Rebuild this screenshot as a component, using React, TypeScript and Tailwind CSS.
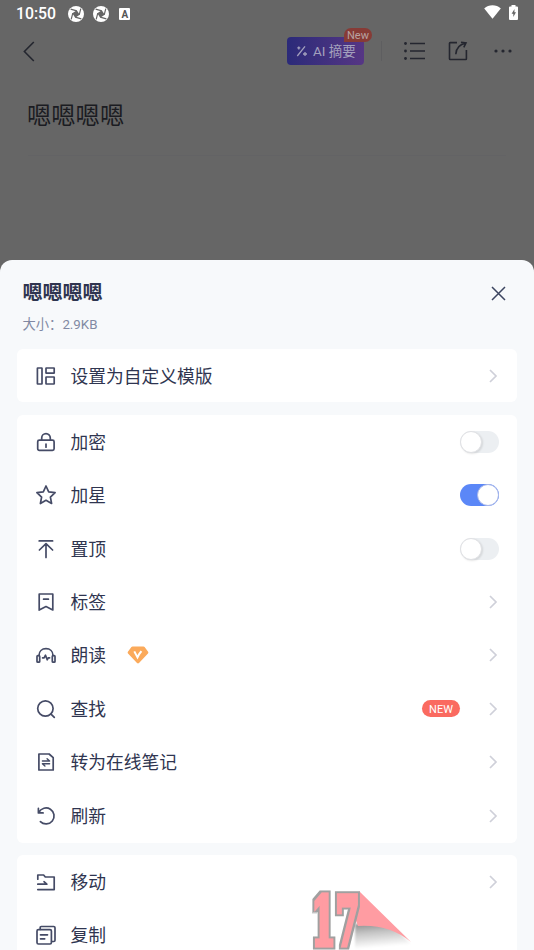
import type { ReactNode } from 'react';
import clsx from 'clsx';

interface MenuRow {
  label: string;
  icon: ReactNode;
  control?: 'toggle' | 'link';
  on?: boolean;
  vip?: boolean;
  isNew?: boolean;
}

function Icon({ children }: { children: ReactNode }) {
  return (
    <svg
      width="22"
      height="22"
      viewBox="0 0 22 22"
      fill="none"
      stroke="#454b66"
      strokeWidth="1.7"
      strokeLinejoin="round"
      strokeLinecap="round"
      className="shrink-0"
    >
      {children}
    </svg>
  );
}

const templateRows: MenuRow[] = [
  {
    label: '设置为自定义模版',
    control: 'link',
    icon: (
      <Icon>
        <rect x="2.4" y="3" width="4.6" height="16" rx="0.3" />
        <rect x="11" y="3" width="8.2" height="5.2" rx="0.3" />
        <rect x="11" y="12" width="8.2" height="7" rx="0.3" />
      </Icon>
    ),
  },
];

const settingRows: MenuRow[] = [
  {
    label: '加密',
    control: 'toggle',
    icon: (
      <Icon>
        <rect x="2.7" y="9.2" width="16.4" height="10.2" rx="1.6" />
        <path d="M6.7 9V7a4.3 4.3 0 0 1 8.6 0v2M11 13v3.2" />
      </Icon>
    ),
  },
  {
    label: '加星',
    control: 'toggle',
    on: true,
    icon: (
      <Icon>
        <path d="M11 2l2.7 5.9 6.4.8-4.7 4.4 1.2 6.4L11 16.3l-5.6 3.2 1.2-6.4-4.7-4.4 6.4-.8z" />
      </Icon>
    ),
  },
  {
    label: '置顶',
    control: 'toggle',
    icon: (
      <Icon>
        <path d="M4.2 2.9h13.4M11 6.200v13.300M4.400 12L11 5.700l6.600 6.300" />
      </Icon>
    ),
  },
  {
    label: '标签',
    control: 'link',
    icon: (
      <Icon>
        <path d="M4.2 3h13.6v16L11 15.6 4.2 19zM8.6 8.2h4.8" />
      </Icon>
    ),
  },
  {
    label: '朗读',
    control: 'link',
    vip: true,
    icon: (
      <Icon>
        <path d="M4 11.5C4 7.4 7 4.700 11 4.700s7 2.700 7 6.800" />
        <rect x="2" y="11.6" width="2.7" height="6.6" rx="0.8" />
        <rect x="17.3" y="11.6" width="2.7" height="6.6" rx="0.8" />
        <path d="M7.6 13.8h1.500l1.400-2.600 1.700 4.600 1-2h1.400" />
      </Icon>
    ),
  },
  {
    label: '查找',
    control: 'link',
    isNew: true,
    icon: (
      <Icon>
        <circle cx="10.4" cy="10.5" r="7.7" />
        <path d="M16 16.1l3.3 3.3" />
      </Icon>
    ),
  },
  {
    label: '转为在线笔记',
    control: 'link',
    icon: (
      <Icon>
        <path d="M3.9 3h10.2l4.1 3.7V19H3.9z" />
        <path d="M7.4 10h7.2l-2.5-2.200M14.6 12.8H7.4l2.5 2.200" strokeWidth="1.4" />
      </Icon>
    ),
  },
  {
    label: '刷新',
    control: 'link',
    icon: (
      <Icon>
        <path d="M3.4 3.4v4.5h4.7M3.9 7.4A8 8 0 1 1 5.4 16.6" />
      </Icon>
    ),
  },
];

const fileRows: MenuRow[] = [
  {
    label: '移动',
    control: 'link',
    icon: (
      <Icon>
        <path d="M2.8 8.2V4h5.8l1.7 2h8.9v12.6H2.8M2.8 13.2h9L9 10.7" />
      </Icon>
    ),
  },
  {
    label: '复制',
    icon: (
      <Icon>
        <rect x="2" y="5.6" width="14.4" height="14.4" rx="1.4" />
        <path d="M5.2 5.3V3.6c0-.7.4-1.1 1.1-1.1h12.4c.8 0 1.3.5 1.3 1.3v12.4c0 .8-.4 1.3-1.2 1.3h-2.1M5.5 10.8h7M5.5 14.8h4.2" />
      </Icon>
    ),
  },
];

function Chevron() {
  return (
    <svg width="9" height="14" viewBox="0 0 9 14" fill="none" stroke="#cfd0d9" strokeWidth="1.7" className="mr-px">
      <path d="M1 1l6 6-6 6" />
    </svg>
  );
}

function Toggle({ on }: { on?: boolean }) {
  return (
    <div className={clsx('flex h-[22px] w-[39px] rounded-full', on ? 'justify-end bg-[#5b87f7]' : 'bg-[#eceff2]')}>
      <div
        className={clsx(
          'size-[22px] rounded-full border bg-white',
          on ? 'border-[#a9b7e8]' : 'border-[#e0e1e4] shadow-[1px_1px_2px_rgba(0,0,0,0.1)]'
        )}
      />
    </div>
  );
}

function VipBadge() {
  return (
    <svg width="22" height="18" viewBox="0 0 22 18" className="ml-[21px]">
      <path
        d="M5.6.5h10.8c.5 0 .9.2 1.2.6l3.5 4.6c.4.6.4 1.2-.1 1.7l-9 9.6c-.6.6-1.4.6-2 0L1 7.4c-.5-.5-.5-1.1-.1-1.7l3.5-4.6c.3-.4.7-.6 1.2-.6z"
        fill="#fbaa5b"
      />
      <path d="M7.3 5.4l3.2 6 1.700-3.400M12.200 8.200l2.200-3" stroke="#fff" strokeWidth="2" fill="none" />
    </svg>
  );
}

function Row({ row }: { row: MenuRow }) {
  return (
    <div className="flex h-[53.45px] items-center px-[18px]">
      {row.icon}
      <span className="ml-[13.5px] pt-[2px] text-[17.75px] leading-6 text-[#2f3550]">{row.label}</span>
      {row.vip && <VipBadge />}
      <div className="ml-auto flex items-center">
        {row.isNew && (
          <span className="mr-[29px] flex h-[17px] w-[38px] items-center justify-center rounded-full bg-[#fa6a60] pt-[2px] text-[11px] leading-none text-white">
            NEW
          </span>
        )}
        {row.control === 'toggle' && <Toggle on={row.on} />}
        {row.control === 'link' && <Chevron />}
      </div>
    </div>
  );
}

function Card({ rows }: { rows: MenuRow[] }) {
  return (
    <div className="mx-[17px] rounded-md bg-white">
      {rows.map((row) => (
        <Row key={row.label} row={row} />
      ))}
    </div>
  );
}

// Aperture-like notification glyph
function Swirl() {
  return (
    <svg width="16" height="16" viewBox="0 0 16 16">
      <circle cx="8" cy="8" r="8" fill="#fff" />
      <path d="M8.800 4.300L11.700 8.800 7.200 11.700 4.300 7.200z" fill="#666" />
      <path d="M8.800 4.800L2.600 3.200M11.200 8.800L12.800 2.600M7.200 11.200L13.400 12.800M4.800 7.200L3.200 13.400" stroke="#666" strokeWidth="1.200" />
    </svg>
  );
}

function StatusBar() {
  return (
    <div className="flex h-7 items-center pr-4 pl-4 text-white">
      <span className="w-[52px] text-[15.8px] font-medium">10:50</span>
      <Swirl />
      <span className="w-[8.6px]" />
      <Swirl />
      <span className="ml-[10.7px] flex h-[11.5px] w-[11px] items-center justify-center rounded-[1px] bg-white pt-px text-[10px] leading-none font-bold text-[#555]">
        A
      </span>
      <svg width="17" height="14" viewBox="0 0 17 14" className="-mt-1 ml-auto">
        <path d="M.2 3.4C4.8-.7 12.2-.7 16.8 3.4L8.5 13.7z" fill="#fff" />
      </svg>
      <svg width="9" height="15" viewBox="0 0 9 15" className="-mt-1 ml-2">
        <path d="M2.5 0h4v1.5H8q1 0 1 1V14q0 1-1 1H1q-1 0-1-1V2.500q0-1 1-1h1.500z" fill="#fff" />
        <path d="M5.500 4L2.600 8.700h1.700v3.300l2.700-4.700H5.400z" fill="#666" />
      </svg>
    </div>
  );
}

function TopBar() {
  return (
    <div className="flex h-[46px] items-center pl-[23px] text-[#24262f]">
      <svg width="12" height="21" viewBox="0 0 12 21" fill="none" stroke="currentColor" strokeWidth="1.6">
        <path d="M10.8 1L1.400 10.500l9.400 9.500" />
      </svg>
      <div className="relative ml-[252px] flex h-7 w-[77px] items-center rounded bg-linear-to-r from-[#2b2a79] to-[#563684] pl-[9px] text-[13.500px] text-[#a3a0bd]">
        <svg width="12" height="12" viewBox="0 0 12 12" fill="none" stroke="currentColor" strokeWidth="1.3">
          <path d="M1.300 11L9 1.400M2.800 1.400v3M1.300 2.900h3M9 7v4M7 9h4" />
        </svg>
        <span className="ml-[5px] whitespace-nowrap">AI 摘要</span>
        <span className="absolute -top-[9px] left-[57px] flex h-3.5 w-7 items-center justify-center rounded-full rounded-bl-none bg-[#873b36] pt-px text-[11px] leading-none text-[#b8a2a2]">
          New
        </span>
      </div>
      <div className="ml-[17px] h-5 w-px bg-[#5e5e60]" />
      <svg width="21" height="20" viewBox="0 0 21 20" className="ml-[21.5px]" fill="currentColor">
        <circle cx="1.500" cy="2.500" r="1.400" />
        <circle cx="1.500" cy="10" r="1.400" />
        <circle cx="1.500" cy="17.500" r="1.400" />
        <path d="M6 2.500h15M6 10h15M6 17.500h15" stroke="currentColor" strokeWidth="1.500" />
      </svg>
      <svg width="20" height="20" viewBox="0 0 20 20" className="ml-[23.5px]" fill="none" stroke="currentColor" strokeWidth="1.600">
        <path d="M9 1.600H2.200q-.7 0-.7.700v15.500q0 .7.700.7h15.500q.7 0 .7-.7V9" />
        <path d="M7.800 13.200C8 8 11 3.500 18 2M13 1.200l5 .7-2.200 4.500" />
      </svg>
      <svg width="18" height="4" viewBox="0 0 18 4" className="ml-[26px]" fill="currentColor">
        <circle cx="2" cy="2" r="1.600" />
        <circle cx="9" cy="2" r="1.600" />
        <circle cx="16" cy="2" r="1.600" />
      </svg>
    </div>
  );
}

function Watermark() {
  return (
    <svg width="120" height="62" viewBox="0 0 120 62" className="absolute top-[888px] left-[309px] overflow-visible">
      <defs>
        <linearGradient id="fold" x1="0" y1="0" x2="0.2" y2="1">
          <stop offset="0" stopColor="#8f8f8f" />
          <stop offset="0.35" stopColor="#c4c4c4" />
          <stop offset="0.9" stopColor="#ffffff" />
        </linearGradient>
        <filter id="soft">
          <feGaussianBlur stdDeviation="1.2" />
        </filter>
        <filter id="outline" x="-20%" y="-20%" width="140%" height="140%">
          <feMorphology in="SourceAlpha" operator="dilate" radius="2" result="grown" />
          <feFlood floodColor="#a0a0a0" />
          <feComposite in2="grown" operator="in" result="edge" />
          <feMerge>
            <feMergeNode in="edge" />
            <feMergeNode in="SourceGraphic" />
          </feMerge>
        </filter>
      </defs>
      <path d="M46 36L76 36 90 44 109 63H46z" fill="url(#fold)" filter="url(#soft)" />
      <path d="M50 3L102 54Q80 36 49 38L44 25z" fill="#ff9ca2" />
      <text
        x="2.5"
        y="57"
        textLength="48"
        lengthAdjust="spacingAndGlyphs"
        fill="#ff9ca2"
        stroke="#ff9ca2"
        strokeWidth="5"
        fontFamily="DejaVu Serif"
        fontWeight="700"
        fontSize="67"
        filter="url(#outline)"
      >
        17
      </text>
    </svg>
  );
}

export default function App() {
  return (
    <div className="relative h-[950px] w-[534px] overflow-hidden bg-[#666] font-[Roboto,'Noto_Sans_CJK_SC',sans-serif]">
      <div className="h-[260px]">
        <StatusBar />
        <TopBar />
        <h1 className="mt-6 ml-[27px] text-[24.300px] leading-9 text-[#1b1c22]">嗯嗯嗯嗯</h1>
        <div className="mx-7 mt-[21px] h-px bg-[#636365]" />
      </div>

      <div className="flex h-[690px] flex-col gap-[12.600px] rounded-t-xl bg-[#f7f9fb]">
        <div className="flex h-[76.400px] shrink-0 justify-between pr-7 pl-[22.5px]">
          <div className="pt-[19px]">
            <h2 className="text-[20px] leading-7 font-bold text-[#2f3550]">嗯嗯嗯嗯</h2>
            <p className="mt-2 text-[13.300px] leading-5 text-[#8189a3]">大小：2.9KB</p>
          </div>
          <svg width="15" height="15" viewBox="0 0 15 15" className="mt-[25.5px]" stroke="#3c4560" strokeWidth="1.500">
            <path d="M1 1l13 13M14 1L1 14" />
          </svg>
        </div>
        <Card rows={templateRows} />
        <Card rows={settingRows} />
        <Card rows={fileRows} />
      </div>

      <Watermark />
    </div>
  );
}
